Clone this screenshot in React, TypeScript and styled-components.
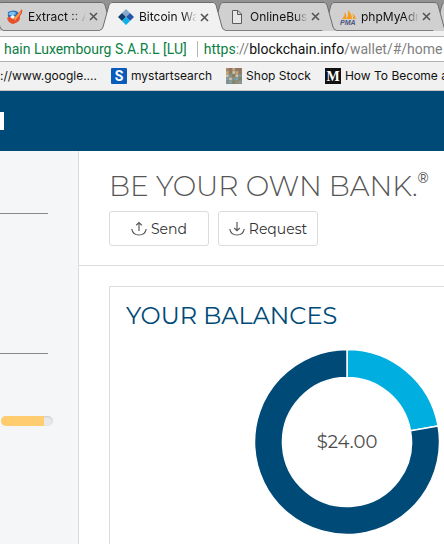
import React from "react";
import styled, { createGlobalStyle } from "styled-components";

const GlobalStyle = createGlobalStyle`
  *, *::before, *::after { box-sizing: border-box; }
  body { margin: 0; background: #fff; overflow: hidden; }
`;

const chromeFont = `Inter, Roboto, "Liberation Sans", sans-serif`;
const addressFont = `Roboto, "Liberation Sans", sans-serif`;
const brandFont = `Montserrat, Inter, sans-serif`;

const Page = styled.div`
  display: flex;
  flex-direction: column;
  height: 100vh;
  overflow: hidden;
  font-family: ${brandFont};
`;

const TabStrip = styled.nav`
  display: flex;
  flex: none;
  height: 31px;
  padding-top: 2px;
  background: #929292;
  border-bottom: 1px solid #7f7f7f;
`;

const TabCell = styled.div<{ $layer: number; $active?: boolean }>`
  display: flex;
  flex: 1 1 0;
  min-width: 0;
  height: ${(p) => (p.$active ? "29px" : "28px")};
  position: relative;
  z-index: ${(p) => p.$layer};
`;

const TabShape = styled.div`
  display: flex;
  flex: 1;
  min-width: 0;
  margin: 0 -3px 0 -11px;
`;

const TabStub = styled.div<{ $side: "left" | "right" }>`
  width: 0;
  height: 28px;
  position: relative;
  z-index: ${(p) => (p.$side === "left" ? 7 : 0)};
  svg { margin-left: ${(p) => (p.$side === "left" ? "-9px" : "-11px")}; }
`;

const Edge = styled.svg`
  display: block;
  flex: none;
  width: 12px;
  height: 29px;
`;

const TabBody = styled.div<{ $active?: boolean }>`
  display: flex;
  align-items: center;
  flex: 1;
  min-width: 0;
  padding: 0 1px 0 6px;
  background: ${(p) => (p.$active ? "#f1f1f1" : "#d0d0d0")};
  border-top: 1px solid #6d6d6d;
  > svg { flex: none; }
`;

const TabTitle = styled.a`
  flex: 1;
  min-width: 0;
  margin-left: 5px;
  overflow: hidden;
  white-space: nowrap;
  color: #111;
  font: 12px/18px ${chromeFont};
  text-decoration: none;
  mask-image: linear-gradient(to right, #000 76%, transparent 100%);
`;

const CloseButton = styled.button`
  display: flex;
  flex: none;
  padding: 3px;
  border: 0;
  background: none;
`;

const Toolbar = styled.div`
  flex: none;
  padding-top: 5px;
  background: #f1f1f1;
  border-bottom: 1px solid #c4c4c4;
`;

const AddressBar = styled.div`
  display: flex;
  align-items: center;
  height: 26px;
  overflow: hidden;
  white-space: nowrap;
  background: #fff;
  border-top: 1px solid #b1b1b1;
  border-bottom: 1px solid #b1b1b1;
  color: #808080;
  font: 14px/22px ${addressFont};
`;

const Issuer = styled.span`
  flex: none;
  padding: 0 10px 0 4px;
  border-right: 1px solid #b5b5b5;
  margin-right: 6px;
  color: #0b8043;
  line-height: 16px;
`;

const Scheme = styled.span`
  color: #0b8043;
`;

const Host = styled.span`
  color: #111;
`;

const Bookmarks = styled.nav`
  display: flex;
  align-items: center;
  gap: 14px;
  height: 28px;
  overflow: hidden;
`;

const Bookmark = styled.a`
  display: flex;
  align-items: center;
  flex: none;
  gap: 4px;
  color: #111;
  font: 12px/18px ${chromeFont};
  text-decoration: none;
  white-space: nowrap;
`;

const Header = styled.header`
  display: flex;
  align-items: center;
  flex: none;
  height: 60px;
  background: #004a77;
`;

const LogoEnd = styled.svg`
  display: block;
  width: 4px;
  height: 18px;
`;

const Columns = styled.div`
  display: flex;
  flex: 1;
  min-height: 0;
`;

const Sidebar = styled.aside`
  flex: none;
  width: 79px;
  padding-top: 62px;
  background: #f5f6f8;
  border-right: 1px solid #dcdcde;
`;

const Rule = styled.hr`
  width: 48px;
  height: 1px;
  margin: 0 0 139px;
  border: 0;
  background: #888;
  & + & { margin-bottom: 62px; }
`;

const Meter = styled.div`
  width: 52px;
  height: 10px;
  margin-left: 1px;
  overflow: hidden;
  border-radius: 5px;
  background: #e8e8e8;
  box-shadow: inset 0 1px 2px #ccc;
`;

const MeterFill = styled.div`
  height: 100%;
  background: #ffcd70;
`;

const Main = styled.main`
  flex: 1;
  min-width: 0;
`;

const Intro = styled.section`
  padding: 17px 0 19px 30px;
  border-bottom: 1px solid #dcdcde;
`;

const Slogan = styled.h1`
  margin: 0 0 7px;
  color: #555;
  font-size: 28px;
  font-weight: 300;
  line-height: 36px;
  white-space: nowrap;
  sup {
    font-size: 14px;
    line-height: 0;
    font-weight: 500;
    vertical-align: 13px;
  }
`;

const Actions = styled.div`
  display: flex;
  gap: 9px;
`;

const ActionButton = styled.button`
  display: flex;
  align-items: center;
  justify-content: center;
  gap: 4px;
  width: 100px;
  height: 35px;
  padding: 0;
  border: 1px solid #dcdcde;
  border-radius: 3px;
  background: #fff;
  color: #333;
  font: 14px/20px ${brandFont};
`;

const Card = styled.section`
  min-width: 476px;
  margin: 20px 0 0 30px;
  padding: 15px 16px 60px;
  border: 1px solid #dcdcde;
`;

const CardTitle = styled.h2`
  margin: 0 0 19px;
  color: #004a77;
  font-size: 24px;
  font-weight: 400;
  line-height: 28px;
`;

const Chart = styled.div`
  display: grid;
  place-items: center;
  > * { grid-area: 1 / 1; }
`;

const Donut = styled.svg`
  display: block;
  width: 186px;
  height: 186px;
`;

const Total = styled.span`
  color: #4c4c4c;
  font-size: 18px;
  line-height: 22px;
`;

const fillOf = (active?: boolean) => (active ? "#f1f1f1" : "#d0d0d0");

const LeftEdge = ({ active }: { active?: boolean }) => (
  <Edge viewBox="0 0 12 29" aria-hidden="true">
    <path d="M0 29 L0 28 Q2 28 3 25 L9 3 Q10 0 12 0 V29Z" fill={fillOf(active)} />
    <path d="M0 28 Q2 28 3 25 L9 3 Q10 .5 12 .5" fill="none" stroke="#6d6d6d" />
  </Edge>
);

const RightEdge = ({ active }: { active?: boolean }) => (
  <Edge viewBox="0 0 12 29" aria-hidden="true">
    <path d="M0 0 Q2 0 3 3 L9 25 Q10 28 12 28 V29 H0Z" fill={fillOf(active)} />
    <path d="M0 .5 Q2 .5 3 3 L9 25 Q10 28 12 28" fill="none" stroke="#6d6d6d" />
  </Edge>
);

const RocketIcon = () => (
  <svg width="16" height="16" viewBox="0 0 16 16" aria-hidden="true">
    <path d="M1 3 Q7 0 11 3 L12 12 L4 12 Q0 9 1 3Z" fill="#2d6fb4" />
    <path d="M1 5 Q3 2 8 3 L9 5 L5 7Z" fill="#7fc0ec" />
    <path d="M0 9 Q4 6 7 9 L15 0 Q16 4 13 7 Q14 13 6 15 Q1 14 0 9Z" fill="#e8502c" />
    <path d="M3 8 L6 6 L8 8 L6 10Z" fill="#fff" />
    <path d="M7 9 L14 2 Q14 5 10 9 L8 12Z" fill="#ff9c4a" />
  </svg>
);

const BlockchainIcon = () => (
  <svg width="16" height="16" viewBox="0 0 16 16" aria-hidden="true">
    <path d="M8 0 L12 4 L8 8 L4 4Z" fill="#85a9c7" />
    <path d="M4 4 L8 8 L4 12 L0 8Z" fill="#133d6e" />
    <path d="M12 4 L16 8 L12 12 L8 8Z" fill="#2455ad" />
    <path d="M8 8 L12 12 L8 16 L4 12Z" fill="#0bb0e8" />
  </svg>
);

const FileIcon = () => (
  <svg width="16" height="16" viewBox="0 0 16 16" aria-hidden="true">
    <path d="M3.5 1.5 H9 L12.5 5 V14.5 H3.5Z M8.5 1.5 V5.5 H12.5" fill="#e6e6e6" stroke="#5c5c5c" />
  </svg>
);

const SailIcon = () => (
  <svg width="16" height="16" viewBox="0 0 16 16" aria-hidden="true">
    <path d="M2 10 Q5 7 5 3 Q7 6 6 10Z M6 10 Q9 6 8 1 Q12 5 12 10Z M13 10 Q14 7 12 4 Q15 6 16 10Z" fill="#f89c1c" />
    <text x="0" y="16" fontSize="7" fontWeight="700" fontStyle="italic" fontFamily="Liberation Sans, sans-serif" fill="#4b5580">PMA</text>
  </svg>
);

const SquareS = () => (
  <svg width="16" height="16" viewBox="0 0 16 16" aria-hidden="true">
    <rect width="16" height="16" rx="1" fill="#0b5cba" />
    <text x="8" y="13" textAnchor="middle" fontSize="14" fontWeight="700" fontFamily="Roboto, sans-serif" fill="#fff">S</text>
  </svg>
);

const SquareM = () => (
  <svg width="16" height="16" viewBox="0 0 16 16" aria-hidden="true">
    <rect width="16" height="16" fill="#111" />
    <text x="8" y="13" textAnchor="middle" fontSize="14" fontWeight="700" fontFamily="Liberation Serif, serif" fill="#fff">M</text>
  </svg>
);

const mosaic = ["#a58c6c", "#7697a0", "#c7a675", "#6f8a71", "#d0c3a4", "#a7665c", "#83a2ae", "#8a7b5f"];

const MosaicIcon = () => (
  <svg width="16" height="16" viewBox="0 0 16 16" aria-hidden="true">
    <rect width="16" height="16" fill="#8d8775" />
    {Array.from({ length: 25 }, (_, i) => (
      <rect key={i} x={(i % 5) * 3.2} y={Math.floor(i / 5) * 3.2} width="2.6" height="2.6" fill={mosaic[(i * 5 + (i >> 2)) % 8]} />
    ))}
  </svg>
);

const CloseIcon = () => (
  <svg width="9" height="9" viewBox="0 0 9 9" aria-hidden="true">
    <path d="M1 1 L8 8 M8 1 L1 8" stroke="#555" strokeWidth="1.6" />
  </svg>
);

const TransferIcon = ({ down }: { down?: boolean }) => (
  <svg width="16" height="16" viewBox="0 0 16 16" fill="none" stroke="#5a5a5a" strokeWidth="1.2" aria-hidden="true">
    <path d="M.8 8 C2 16 14 16 15.2 8" />
    <path d={down ? "M8 1 V9.5 M5.2 7 L8 9.7 L10.8 7" : "M8 10 V1.5 M5.2 4.2 L8 1.5 L10.8 4.2"} />
  </svg>
);

const tabs = [
  { title: "Extract :: A", icon: <RocketIcon /> },
  { title: "Bitcoin Wallet", icon: <BlockchainIcon />, active: true },
  { title: "OnlineBusiness", icon: <FileIcon /> },
  { title: "phpMyAdmin", icon: <SailIcon /> },
];

const bookmarks = [
  { title: "://www.google....", icon: null },
  { title: "mystartsearch", icon: <SquareS /> },
  { title: "Shop Stock", icon: <MosaicIcon /> },
  { title: "How To Become a", icon: <SquareM /> },
];

export default function App() {
  return (
    <Page>
      <GlobalStyle />
      <TabStrip aria-label="Tabs">
        <TabStub $side="left"><RightEdge /></TabStub>
        {tabs.map((tab, i) => (
          <TabCell key={tab.title} $active={tab.active} $layer={tab.active ? 6 : 5 - i}>
            <TabShape>
              <LeftEdge active={tab.active} />
              <TabBody $active={tab.active}>
                {tab.icon}
                <TabTitle href="#">{tab.title}</TabTitle>
                <CloseButton aria-label={`Close ${tab.title}`}><CloseIcon /></CloseButton>
              </TabBody>
              <RightEdge active={tab.active} />
            </TabShape>
          </TabCell>
        ))}
        <TabStub $side="right"><LeftEdge /></TabStub>
      </TabStrip>
      <Toolbar>
        <AddressBar>
          <Issuer>hain Luxembourg S.A.R.L [LU]</Issuer>
          <span><Scheme>https</Scheme>://<Host>blockchain.info</Host>/wallet/#/home</span>
        </AddressBar>
        <Bookmarks aria-label="Bookmarks">
          {bookmarks.map((b) => (
            <Bookmark key={b.title} href="#">{b.icon}{b.title}</Bookmark>
          ))}
        </Bookmarks>
      </Toolbar>
      <Header>
        <LogoEnd viewBox="0 0 4 18" aria-hidden="true"><rect width="4" height="18" fill="#fff" /></LogoEnd>
      </Header>
      <Columns>
        <Sidebar>
          <Rule />
          <Rule />
          <Meter role="progressbar" aria-label="Security level" aria-valuenow={83} aria-valuemin={0} aria-valuemax={100}>
            <MeterFill style={{ width: "83%" }} />
          </Meter>
        </Sidebar>
        <Main>
          <Intro>
            <Slogan>BE YOUR OWN BANK.<sup>®</sup></Slogan>
            <Actions>
              <ActionButton><TransferIcon />Send</ActionButton>
              <ActionButton><TransferIcon down />Request</ActionButton>
            </Actions>
          </Intro>
          <Card>
            <CardTitle>YOUR BALANCES</CardTitle>
            <Chart>
              <Donut viewBox="-93 -93 186 186" role="img" aria-label="Balance breakdown">
                <g stroke="#fff" strokeWidth="1.5">
                  <path d="M0 -92.5 A92.5 92.5 0 0 1 91.1 -16.1 L63.5 -11.2 A64.5 64.5 0 0 0 0 -64.5Z" fill="#00aee0" />
                  <path d="M91.1 -16.1 A92.5 92.5 0 1 1 0 -92.5 V-64.5 A64.5 64.5 0 1 0 63.5 -11.2Z" fill="#004a77" />
                </g>
              </Donut>
              <Total>$24.00</Total>
            </Chart>
          </Card>
        </Main>
      </Columns>
    </Page>
  );
}
